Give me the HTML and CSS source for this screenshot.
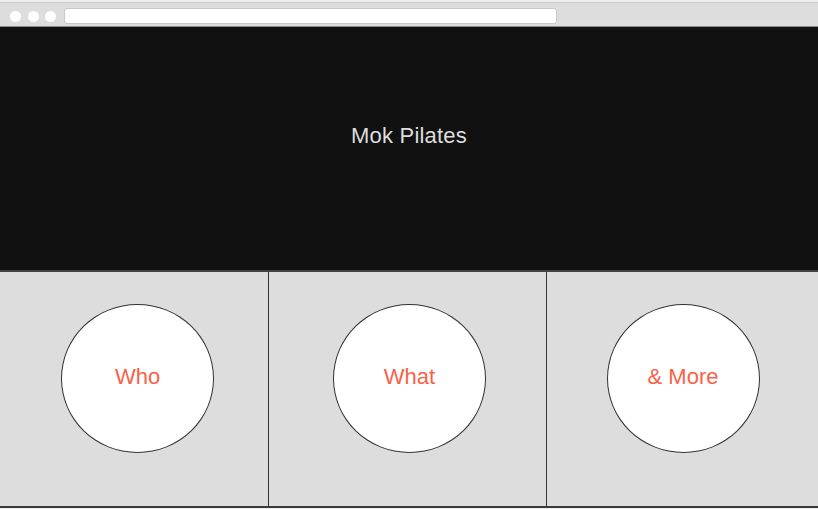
FILE: index.html
```html
<!DOCTYPE html>
<html>
<head>
<meta charset="utf-8">
<link rel="stylesheet" href="styles.css">
</head>
<body>
<div class="chrome">
  <span class="dot"></span><span class="dot"></span><span class="dot"></span>
  <div class="address"></div>
</div>
<header class="hero">
  <h1 class="title">Mok Pilates</h1>
</header>
<main class="panels">
  <section class="col col-1"><div class="circle">Who</div></section>
  <section class="col col-2"><div class="circle">What</div></section>
  <section class="col col-3"><div class="circle">&amp; More</div></section>
</main>
</body>
</html>
```
FILE: styles.css
```css
html, body {
  margin: 0;
  padding: 0;
}
body {
  background: #ececec;
  font-family: "Liberation Sans", Arial, sans-serif;
  padding-top: 2px;
  height: 507px;
  overflow: hidden;
}
.chrome {
  height: 20px;
  padding-top: 3px;
  background: #dddddd;
  border-top: 1px solid #c9c9c9;
  border-bottom: 1px solid #8a8a8a;
  display: flex;
  align-items: center;
  padding-left: 10px;
  gap: 6.5px;
}
.dot {
  width: 11px;
  height: 11px;
  border-radius: 50%;
  background: #ffffff;
  flex: none;
}
.address {
  margin-left: 1px;
  width: 491px;
  height: 14px;
  background: #ffffff;
  border: 1px solid #c8c8c8;
  border-radius: 3px;
}
.hero {
  height: 217px;
  padding-bottom: 26px;
  background: #111111;
  border-bottom: 2px solid #444444;
  display: flex;
  align-items: center;
  justify-content: center;
}
.title {
  margin: 0;
  color: #dddddd;
  font-weight: normal;
  font-size: 22px;
  letter-spacing: 0.2px;
}
.panels {
  height: 234px;
  background: #dddddd;
  border-bottom: 2px solid #3a3a3a;
  display: grid;
  grid-template-columns: 269px 278px 1fr;
}
.col {
  display: flex;
  justify-content: center;
  align-items: flex-start;
  padding-top: 32px;
}
.col-1, .col-2 {
  border-right: 1px solid #333333;
}
.col-1 { padding-left: 7px; }
.col-2 { padding-left: 4px; }
.col-3 { padding-left: 1px; }
.circle {
  width: 151px;
  height: 143px;
  border: 1px solid #333333;
  border-radius: 50%;
  background: #ffffff;
  color: #fa6148;
  font-size: 22px;
  display: flex;
  align-items: center;
  justify-content: center;
  padding-bottom: 4px;
  box-sizing: content-box;
}
```
